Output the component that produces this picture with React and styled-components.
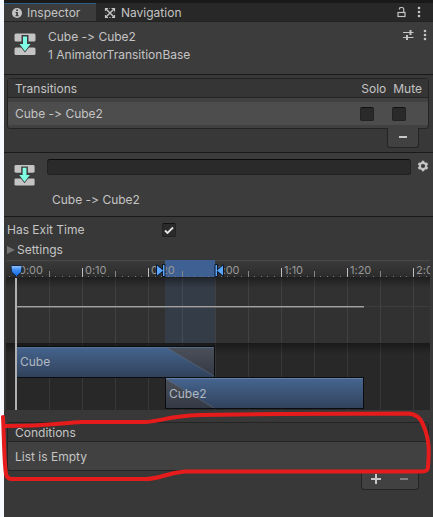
import React from "react";
import styled, { createGlobalStyle } from "styled-components";

const GlobalStyle = createGlobalStyle`
  * { box-sizing: border-box; }
  body { margin: 0; background: #f6f9fe; }
  button, input { font: inherit; color: inherit; margin: 0; padding: 0; }
`;

const Page = styled.div`
  min-height: 100vh;
  padding-left: 4px;
  display: flex;
  font: 12px/18px Inter, sans-serif;
  font-variant-ligatures: none;
  font-feature-settings: "calt" 0;
  color: #c4c4c4;
`;
const Panel = styled.main`
  flex: 1;
  min-width: 0;
  background: #383838;
`;
const TabBar = styled.div`
  display: flex;
  height: 22px;
  border-top: 3px solid #191919;
  border-bottom: 1px solid #232323;
  background: #282828;
`;
const Tab = styled.button`
  display: flex;
  align-items: center;
  gap: 5px;
  height: 18px;
  padding: 0 9px 0 8px;
  border: 0;
  border-top: 1px solid ${(p) => (p.$active ? "#2c5d87" : "transparent")};
  background: ${(p) => (p.$active ? "#3c3c3c" : "transparent")};
  width: ${(p) => (p.$active ? "92px" : "auto")};
  white-space: nowrap;
`;
const BarTools = styled.div`
  display: flex;
  align-items: center;
  gap: 11px;
  margin-left: auto;
  padding-right: 12px;
`;
const IconButton = styled.button`
  display: flex;
  border: 0;
  background: none;
`;
const Header = styled.header`
  display: flex;
  align-items: flex-start;
  height: 53px;
  padding: 6px 6px 0 10px;
  gap: 10px;
  background: #3c3c3c;
  border-bottom: 1px solid #1a1a1a;
`;
const HeaderIcon = styled.div`
  display: flex;
  padding-top: 5px;
`;
const HeaderText = styled.div`
  flex: 1;
`;
const HeaderTools = styled.div`
  display: flex;
  gap: 9px;
  padding-top: 1px;
`;
const ListBlock = styled.section`
  margin: 3px 4px 0 3px;
`;
const ListBox = styled.div`
  border: 1px solid #242424;
  border-radius: 3px;
  background: #414141;
`;
const ListHead = styled.div`
  display: flex;
  align-items: center;
  height: 19px;
  padding: 1px 6px 0 7px;
  gap: 7px;
  border-bottom: 1px solid #242424;
  background: #353535;
`;
const ListTitle = styled.span`
  flex: 1;
`;
const ListBody = styled.div`
  padding: 4px 0 3px;
`;
const ListRow = styled.div`
  display: flex;
  align-items: center;
  height: 23px;
  padding: 0 22px 0 7px;
  gap: 18px;
  background: ${(p) => (p.$selected ? "#4d4d4d" : "transparent")};
`;
const EmptyRow = styled.div`
  height: 28px;
  padding: 6px 7px 0;
`;
const ListFooter = styled.div`
  display: flex;
  width: max-content;
  height: 20px;
  margin: -1px 10px 0 auto;
  border: 1px solid #242424;
  border-top: 0;
  border-radius: 0 0 3px 3px;
  background: #414141;
`;
const FooterButton = styled.button`
  display: flex;
  align-items: center;
  justify-content: center;
  width: ${(p) => (p.$wide ? "30px" : "28px")};
  padding-bottom: 2px;
  border: 0;
  background: none;
  color: ${(p) => (p.disabled ? "#808080" : "#c8c8c8")};
`;
const Check = styled.input`
  appearance: none;
  width: 14px;
  height: 14px;
  flex: none;
  border: 1px solid #222;
  border-top-color: #111;
  border-radius: 2px;
  background: #2a2a2a;
  &:checked {
    background: #2a2a2a url("data:image/svg+xml,%3Csvg xmlns='http://www.w3.org/2000/svg' width='12' height='12'%3E%3Cpath d='M2 6.500l2.500 2.500L10 3.500' fill='none' stroke='%23e4e4e4' stroke-width='1.800'/%3E%3C/svg%3E") center no-repeat;
  }
`;
const Detail = styled.section`
  display: grid;
  grid-template-columns: 24px 1fr 12px;
  column-gap: 6px;
  height: 65px;
  margin-top: 4px;
  padding: 6px 4px 0 9px;
  background: #3c3c3c;
  border-top: 1px solid #1a1a1a;
  border-bottom: 1px solid #1a1a1a;
`;
const DetailIcon = styled.div`
  display: flex;
  padding: 5px 0 0 1px;
`;
const NameColumn = styled.div`
  padding-left: 4px;
`;
const NameField = styled.input`
  display: block;
  width: 100%;
  height: 16px;
  padding: 0 4px;
  border: 1px solid #212121;
  border-top-color: #0d0d0d;
  border-radius: 3px;
  background: #2a2a2a;
`;
const NameCaption = styled.div`
  padding: 16px 5px 0;
`;
const GearCell = styled.div`
  padding-top: 1px;
`;
const Options = styled.section`
  padding: 3px 3px 1px;
`;
const OptionRow = styled.label`
  display: grid;
  grid-template-columns: 155px auto;
  justify-content: start;
  align-items: center;
  height: 20px;
`;
const Foldout = styled.button`
  display: flex;
  align-items: center;
  gap: 2px;
  height: 19px;
  border: 0;
  background: none;
`;
const TimelineBox = styled.section`
  height: 150px;
  margin: 0 3px 0 2px;
  overflow: hidden;
`;
const Drawing = styled.svg`
  display: block;
  width: 100%;
  height: 100%;
`;
const Highlighted = styled.div`
  position: relative;
  padding-top: 9px;
`;
const Scribble = styled.svg`
  position: absolute;
  top: 0;
  left: -4px;
  width: calc(100% + 4px);
  height: 76px;
  pointer-events: none;
`;

const TransitionIcon = () => (
  <svg width="24" height="24" viewBox="0 0 24 24">
    <rect x="0.500" y="0.500" width="21" height="8" rx="1.500" fill="#c4c4c4" />
    <rect x="0.500" y="14.500" width="21" height="7.500" rx="1.500" fill="#c4c4c4" />
    <path d="M7.500 2h7v8h4l-7.500 9.500l-7.500-9.500h4z" fill="#3c3c3c" />
    <path d="M9 3.500h4v7.500h3.500L11 18.300 5.500 11h3.500z" fill="#7fffe4" />
  </svg>
);
const InfoIcon = () => (
  <svg width="10" height="10" viewBox="0 0 10 10">
    <circle cx="5" cy="5" r="5" fill="#c4c4c4" />
    <path d="M4.200 1.600h1.700v1.500H4.200zM3.500 4h2.400v3.300h.8v1H3.400v-1h.8V5h-.7z" fill="#3c3c3c" />
  </svg>
);
const NavIcon = () => (
  <svg width="12" height="12" viewBox="0 0 12 12" fill="none" stroke="#c4c4c4">
    <path d="M2 2l8 8M2 10L10 2" strokeWidth="1.500" />
    <path d="M7.500 1.500h3v3M1.500 4V1.500H4M10.500 8v2.500H8M1.500 8v2.500H4" strokeWidth="1.200" />
    <path d="M5 1.500h1M5 10.500h2M1.500 6h1M9.500 6h1" opacity=".55" />
  </svg>
);
const DotsIcon = () => (
  <svg width="4" height="12" viewBox="0 0 4 12" fill="#c4c4c4">
    <circle cx="2" cy="2" r="1.300" />
    <circle cx="2" cy="6" r="1.300" />
    <circle cx="2" cy="10" r="1.300" />
  </svg>
);
const LockIcon = () => (
  <svg width="9" height="12" viewBox="0 0 9 12" fill="none" stroke="#c4c4c4">
    <rect x="1" y="6.500" width="7" height="4" strokeWidth="1.200" />
    <path d="M2.500 3.500V2.500Q2.500 1.500 4 1.500H5Q6.700 1.500 6.700 3V6" strokeWidth="1.200" />
  </svg>
);
const SlidersIcon = () => (
  <svg width="11" height="12" viewBox="0 0 11 12" fill="none" stroke="#c4c4c4">
    <path d="M0 3.500h10.500M0 8.500h10.500" />
    <path d="M7.500 1v5M4 6v5" strokeWidth="2" />
  </svg>
);
const GearIcon = () => (
  <svg width="12" height="12" viewBox="0 0 12 12" fill="none" stroke="#c4c4c4">
    <circle cx="6" cy="6" r="3.200" strokeWidth="2.200" />
    <path d="M6 .7v1.800M6 9.500v1.800M1.400 3.350l1.560.9M9.040 7.750l1.560.9M1.400 8.650l1.560-.9M9.040 4.250l1.560-.9" strokeWidth="2.500" />
  </svg>
);
const MinusIcon = () => (
  <svg width="10" height="10" viewBox="0 0 10 10" fill="currentColor"><path d="M1 4h8v2H1z" /></svg>
);
const PlusIcon = () => (
  <svg width="10" height="10" viewBox="0 0 10 10" fill="currentColor"><path d="M0 4h4V0h2v4h4v2H6v4H4V6H0z" /></svg>
);
const FoldIcon = () => (
  <svg width="8" height="10" viewBox="0 0 8 10"><path d="M0 1v8l8-4z" fill="#757575" /></svg>
);

const STEP = 33.1;
const ticks = Array.from({ length: 13 }, (_, i) => 10 + Math.round(i * STEP));
const minorTicks = Array.from({ length: 64 }, (_, i) => 3 + Math.round(i * 6.62)).filter(
  (x) => !ticks.some((t) => Math.abs(t - x) < 2)
);
const labels = ["0:00", "0:10", "0:20", "1:00", "1:10", "1:20", "2:00"];

const Timeline = () => (
  <TimelineBox aria-label="Transition timeline">
    <Drawing>
      <defs>
        <linearGradient id="ruler" x2="0" y2="1">
          <stop stopColor="#3b3b3b" /><stop offset="1" stopColor="#2b2b2b" />
        </linearGradient>
        <linearGradient id="shade" x2="0" y2="1">
          <stop stopColor="#000" stopOpacity=".35" /><stop offset="1" stopColor="#000" stopOpacity="0" />
        </linearGradient>
        <linearGradient id="blue" x2="0" y2="1">
          <stop stopColor="#466590" /><stop offset="1" stopColor="#30425b" />
        </linearGradient>
        <linearGradient id="grey" x2="0" y2="1">
          <stop stopColor="#4b505a" /><stop offset="1" stopColor="#343a45" />
        </linearGradient>
        <linearGradient id="marker" x2="0" y2="1">
          <stop stopColor="#9cc8ff" /><stop offset=".4" stopColor="#3d8df5" /><stop offset="1" stopColor="#1267dd" />
        </linearGradient>
      </defs>
      <rect width="100%" height="18" fill="url(#ruler)" />
      <rect width="100%" height="1" fill="#484848" />
      <rect y="18" width="100%" height="66" fill="#313131" />
      <rect y="84" width="100%" height="66" fill="#282828" />
      <rect x="159" width="50" height="18" fill="#3f6092" />
      <rect x="159" y="18" width="50" height="66" fill="#343c48" />
      {ticks.map((x, i) => (
        <React.Fragment key={x}>
          <rect x={x} y="18" width="1" height="132" fill="#fff" opacity=".08" />
          <rect x={x} y={i % 2 ? 11 : 8} width="1" height={i % 2 ? 7 : 10} fill={i % 2 ? "#858585" : "#c0c0c0"} />
        </React.Fragment>
      ))}
      {minorTicks.map((x) => <rect key={x} x={x} y="16" width="1" height="1" fill="#777" />)}
      <g fill="#989898" fontSize="11" fontFamily="Inter, sans-serif">
        {labels.map((label, i) => <text key={label} x={ticks[i * 2] + 3} y="14">{label}</text>)}
      </g>
      <rect y="17" width="100%" height="1" fill="#202020" />
      <rect y="18" width="100%" height="10" fill="url(#shade)" />
      <rect y="83" width="100%" height="1" fill="#1b1a1b" />
      <rect y="84" width="100%" height="10" fill="url(#shade)" />
      <rect x="10" y="46" width="100%" height="1" fill="#3d3d3d" />
      <rect x="10" y="46" width="348" height="1" fill="#a2a2a2" />
      <rect x="10" y="47" width="348" height="1" fill="#626262" />

      <rect x="10" y="86" width="199" height="31" fill="url(#blue)" />
      <path d="M160 87L208 116V87z" fill="url(#grey)" />
      <path d="M160 87L208 116" stroke="#6a7078" opacity=".5" />
      <rect x="10.500" y="86.500" width="198" height="31" fill="none" stroke="#0b0c10" />
      <path d="M11 87.500H208" stroke="#5b7799" opacity=".7" />
      <rect x="159" y="118" width="199" height="31" fill="url(#blue)" />
      <path d="M160 119V148H208z" fill="url(#grey)" />
      <path d="M160 119L208 148" stroke="#6a7078" opacity=".5" />
      <rect x="159.500" y="117.500" width="198" height="31" fill="none" stroke="#0b0c10" />
      <path d="M160 118.500H357" stroke="#6b87aa" opacity=".8" />
      <g fill="#b0b7c0" fontSize="12" fontFamily="Inter, sans-serif">
        <text x="14" y="106">Cube</text>
        <text x="163" y="138">Cube2</text>
      </g>
      <rect x="9" y="18" width="2" height="132" fill="#b0b0b0" />
      <path d="M5 6.500Q5 5.500 6 5.500H15Q16 5.500 16 6.500L15.500 12L10.500 16.500L5.500 12z" fill="url(#marker)" stroke="#102341" />
      <path d="M151 5.500v10l6-5zM157 5h1.500v11H157z" fill="#5aa6ff" stroke="#0d1726" strokeWidth="2" strokeLinejoin="round" paintOrder="stroke" />
      <path d="M217 5.500v10l-6-5zM209.500 5h1.500v11H209.500z" fill="#5aa6ff" stroke="#0d1726" strokeWidth="2" strokeLinejoin="round" paintOrder="stroke" />
    </Drawing>
  </TimelineBox>
);

export default function App() {
  return (
    <Page>
      <GlobalStyle />
      <Panel>
        <TabBar>
          <Tab $active><InfoIcon />Inspector</Tab>
          <Tab><NavIcon />Navigation</Tab>
          <BarTools>
            <IconButton aria-label="Lock"><LockIcon /></IconButton>
            <IconButton aria-label="Tab menu"><DotsIcon /></IconButton>
          </BarTools>
        </TabBar>
        <Header>
          <HeaderIcon><TransitionIcon /></HeaderIcon>
          <HeaderText>
            <div>Cube -&gt; Cube2</div>
            <div>1 AnimatorTransitionBase</div>
          </HeaderText>
          <HeaderTools>
            <IconButton aria-label="Presets"><SlidersIcon /></IconButton>
            <IconButton aria-label="More"><DotsIcon /></IconButton>
          </HeaderTools>
        </Header>
        <ListBlock>
          <ListBox>
            <ListHead>
              <ListTitle>Transitions</ListTitle>
              <span>Solo</span>
              <span>Mute</span>
            </ListHead>
            <ListBody>
              <ListRow $selected>
                <ListTitle>Cube -&gt; Cube2</ListTitle>
                <Check type="checkbox" aria-label="Solo" />
                <Check type="checkbox" aria-label="Mute" />
              </ListRow>
            </ListBody>
          </ListBox>
          <ListFooter>
            <FooterButton $wide aria-label="Remove transition"><MinusIcon /></FooterButton>
          </ListFooter>
        </ListBlock>
        <Detail>
          <DetailIcon><TransitionIcon /></DetailIcon>
          <NameColumn>
            <NameField type="text" aria-label="Transition name" />
            <NameCaption>Cube -&gt; Cube2</NameCaption>
          </NameColumn>
          <GearCell><IconButton aria-label="Settings"><GearIcon /></IconButton></GearCell>
        </Detail>
        <Options>
          <OptionRow>
            Has Exit Time
            <Check type="checkbox" defaultChecked />
          </OptionRow>
          <Foldout><FoldIcon />Settings</Foldout>
        </Options>
        <Timeline />
        <Highlighted>
          <ListBlock>
            <ListBox>
              <ListHead><ListTitle>Conditions</ListTitle></ListHead>
              <EmptyRow>List is Empty</EmptyRow>
            </ListBox>
            <ListFooter>
              <FooterButton aria-label="Add condition"><PlusIcon /></FooterButton>
              <FooterButton disabled aria-label="Remove condition"><MinusIcon /></FooterButton>
            </ListFooter>
          </ListBlock>
          <Scribble viewBox="0 0 433 76" preserveAspectRatio="none">
            <path
              d="M3 7C4 25 4 52 6 64Q7 69 12 69H145C162 69 164 63 185 61.500H420Q428 62 428 57C429 44 430 31 424 17Q420 4 408 3.500L280 4L200 5C166 6 160 12 144 12H82C60 13 50 16 5 16"
              fill="none" stroke="#e61c1c" strokeWidth="4" strokeLinecap="round" strokeLinejoin="round"
            />
          </Scribble>
        </Highlighted>
      </Panel>
    </Page>
  );
}
